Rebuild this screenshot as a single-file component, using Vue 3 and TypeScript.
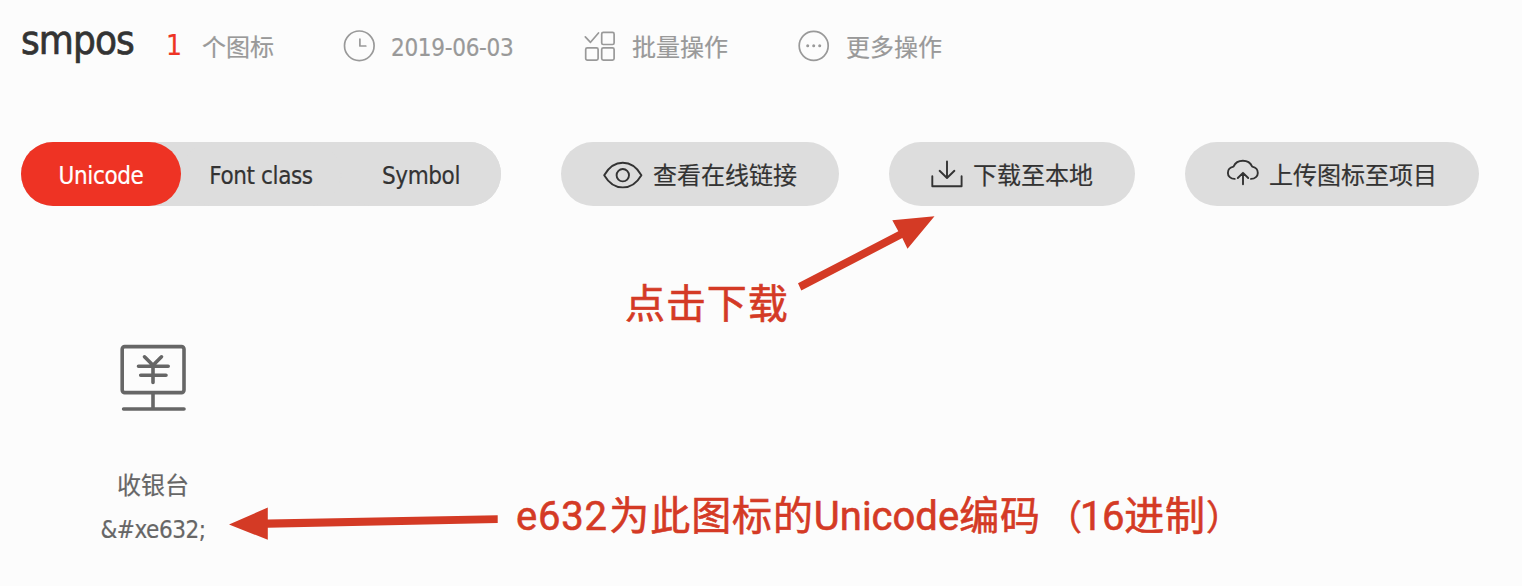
<script setup lang="ts">
import { ref } from 'vue'

const formats: string[] = ['Unicode', 'Font class', 'Symbol']
const active = ref<string>('Unicode')
const code = '&#xe632;'
</script>

<template>
  <main class="page">
    <header class="head">
      <h1 class="name">smpos</h1>
      <span class="count">1</span>
      <span class="unit">个图标</span>
      <div class="meta date">
        <svg class="icon" width="34" height="34" viewBox="0 0 34 34">
          <circle cx="17.3" cy="16.8" r="14.8" />
          <path d="M17.9 10.1V17H23.8" />
        </svg>
        <span class="latin">2019-06-03</span>
      </div>
      <div class="meta batch">
        <svg class="icon" width="34" height="34" viewBox="0 0 34 34">
          <path d="M2.3 7.8L7.5 13.3L15.5 4" />
          <rect x="18.7" y="3.3" width="12.4" height="12.2" rx="1.6" />
          <rect x="2.7" y="18.9" width="12.4" height="12.2" rx="1.6" />
          <rect x="18.7" y="18.9" width="12.4" height="12.2" rx="1.6" />
        </svg>
        <span>批量操作</span>
      </div>
      <div class="meta more">
        <svg class="icon" width="34" height="34" viewBox="0 0 34 34">
          <circle cx="16.7" cy="16.8" r="14.5" />
          <g class="dots">
            <circle cx="10.7" cy="16.8" r="1.5" />
            <circle cx="16.7" cy="16.8" r="1.5" />
            <circle cx="22.7" cy="16.8" r="1.5" />
          </g>
        </svg>
        <span>更多操作</span>
      </div>
    </header>

    <section class="toolbar">
      <div class="tabs">
        <button
          v-for="item in formats"
          :key="item"
          class="tab"
          :class="{ on: item === active }"
          @click="active = item"
        >{{ item }}</button>
      </div>
      <button class="action view">
        <svg width="40" height="30" viewBox="0 0 40 30">
          <path d="M1.2 15.2C6 7 12.3 2.8 19.8 2.8S33.6 7 38.4 15.2C33.6 23.4 27.3 27.4 19.8 27.4S6 23.4 1.2 15.2Z" />
          <circle cx="19.8" cy="15.2" r="6.2" />
        </svg>
        <span>查看在线链接</span>
      </button>
      <button class="action download">
        <svg width="34" height="30" viewBox="0 0 34 30">
          <path d="M17 1.4V17.8M9.6 10.8L17 18L24.4 10.8M2.3 16.2V26.2H31.6V16.2" />
        </svg>
        <span>下载至本地</span>
      </button>
      <button class="action upload">
        <svg width="34" height="30" viewBox="0 0 34 30">
          <path d="M8.7 19.9C4.6 19.9 1.9 17.2 1.9 13.9C1.9 10.5 4.3 8.2 7.5 7.6C9.2 3.9 12.6 1.8 16.9 1.8S24.5 3.9 26.2 7.6C29.4 8.2 31.8 10.5 31.8 13.9C31.8 17.2 29.1 19.9 25 19.9M17 25.2V14M11.8 19L17 13.8L22.2 19" />
        </svg>
        <span>上传图标至项目</span>
      </button>
    </section>

    <section class="item">
      <svg class="till" width="70" height="70" viewBox="0 0 70 70">
        <rect x="4.2" y="3.6" width="61.8" height="46" rx="2.5" />
        <path d="M35 50V66M5.6 66H66M26.5 13.8L35 22.2L43.5 13.8M35 22.5V39.5M20.5 23.2H50.2M22.7 32.2H48" />
      </svg>
      <div class="label">收银台</div>
      <div class="code">{{ code }}</div>
    </section>

    <svg class="arrows" width="1522" height="586" viewBox="0 0 1522 586">
      <path d="M934.5 216.2L892.3 220.2L898.3 231.3L798 283.3L801.3 290.6L902.3 238L907.5 248.8Z" />
      <path d="M229 524.5L267.8 507.5V519.4L497.7 515.2V523L267.8 527.8V539.8Z" />
    </svg>
    <p class="note tip-download">点击下载</p>
    <p class="note tip-code"><span class="hex">e632</span>为此图标的<span class="uni">Unicode</span>编码<span class="paren">（</span><span class="num">16</span>进制<span class="paren">）</span></p>
  </main>
</template>

<style>
body {
  margin: 0;
  background: #fcfcfc;
}
</style>

<style scoped>
.page {
  position: relative;
  width: 1522px;
  height: 586px;
  overflow: hidden;
  background: #fcfcfc;
  color: #333;
  font-family: "DejaVu Sans Condensed", "DejaVu Sans", "Noto Sans CJK SC", sans-serif;
  font-stretch: condensed;
  font-size: 24px;
  -webkit-text-stroke-width: 0.2px;
}
.head {
  display: flex;
  height: 142px;
  padding-left: 21px;
  color: #999;
  line-height: 97px;
  white-space: nowrap;
}
.name {
  width: 145px;
  margin: 0;
  color: #333;
  font-size: 40px;
  font-weight: 400;
  line-height: 80px;
  letter-spacing: -0.9px;
  -webkit-text-stroke-width: 0.7px;
}
.count {
  width: 36px;
  color: #ee3324;
  font-size: 28px;
  line-height: 92px;
}
.unit {
  width: 140px;
}
.meta {
  display: flex;
}
.icon {
  margin: 29px 15px 0 0;
  fill: none;
  stroke: #999;
  stroke-width: 1.7;
  stroke-linejoin: round;
  stroke-linecap: round;
}
.dots {
  fill: #999;
  stroke: none;
}
.date {
  width: 241px;
}
.batch {
  width: 214px;
}
.latin {
  letter-spacing: -0.3px;
}
.toolbar {
  display: flex;
  height: 64px;
  padding-left: 21px;
}
button {
  flex: none;
  box-sizing: border-box;
  padding: 0;
  border: 0;
  border-radius: 32px;
  background: #ddd;
  color: #333;
  font: inherit;
  white-space: nowrap;
}
.tabs {
  display: flex;
  flex: none;
  width: 480px;
  margin-right: 60px;
  border-radius: 32px;
  background: #ddd;
}
.tab {
  width: 160px;
  padding-top: 3px;
  letter-spacing: -0.4px;
}
.tab.on {
  background: #ee3324;
  color: #fff;
}
.action {
  display: flex;
  align-items: center;
  justify-content: flex-start;
  margin-right: 50px;
}
.action svg {
  flex: none;
  margin: 1px 10px 0 0;
  fill: none;
  stroke: #333;
  stroke-width: 1.9;
  stroke-linecap: round;
  stroke-linejoin: round;
}
.action span {
  padding-bottom: 1px;
}
.view {
  width: 278px;
  padding-left: 42px;
}
.download {
  width: 246px;
  padding-left: 41px;
}
.download svg,
.upload svg {
  margin-right: 9px;
}
.upload {
  width: 294px;
  padding-left: 41px;
}
.upload svg {
  margin-top: 0;
}
.item {
  width: 266px;
  margin-left: 20px;
  padding-top: 137px;
  color: #666;
  text-align: center;
  line-height: 44px;
}
.till {
  display: block;
  margin: 0 auto 51px;
  fill: none;
  stroke: #666;
  stroke-width: 3.6;
  stroke-linecap: round;
  stroke-linejoin: round;
}
.code {
  letter-spacing: -0.45px;
}
.arrows {
  position: absolute;
  inset: 0;
  fill: #d43a25;
  pointer-events: none;
}
.note {
  position: absolute;
  margin: 0;
  color: #d43a25;
  font-family: Roboto, "Noto Sans CJK SC", sans-serif;
  font-size: 40px;
  font-stretch: normal;
  line-height: 60px;
  letter-spacing: 0.9px;
  white-space: nowrap;
  -webkit-text-stroke-width: 0.6px;
}
.tip-download {
  left: 625px;
  top: 275px;
}
.tip-code {
  left: 516px;
  top: 487px;
}
.hex {
  margin-right: 1.5px;
  letter-spacing: 0.8px;
}
.uni {
  letter-spacing: 0;
}
.num {
  margin-left: -2px;
  letter-spacing: -0.4px;
}
.paren {
  display: inline-block;
  width: 41px;
  font-size: 35px;
  letter-spacing: 0;
}
.paren:first-of-type,
.uni + .paren {
  text-align: right;
}
</style>
